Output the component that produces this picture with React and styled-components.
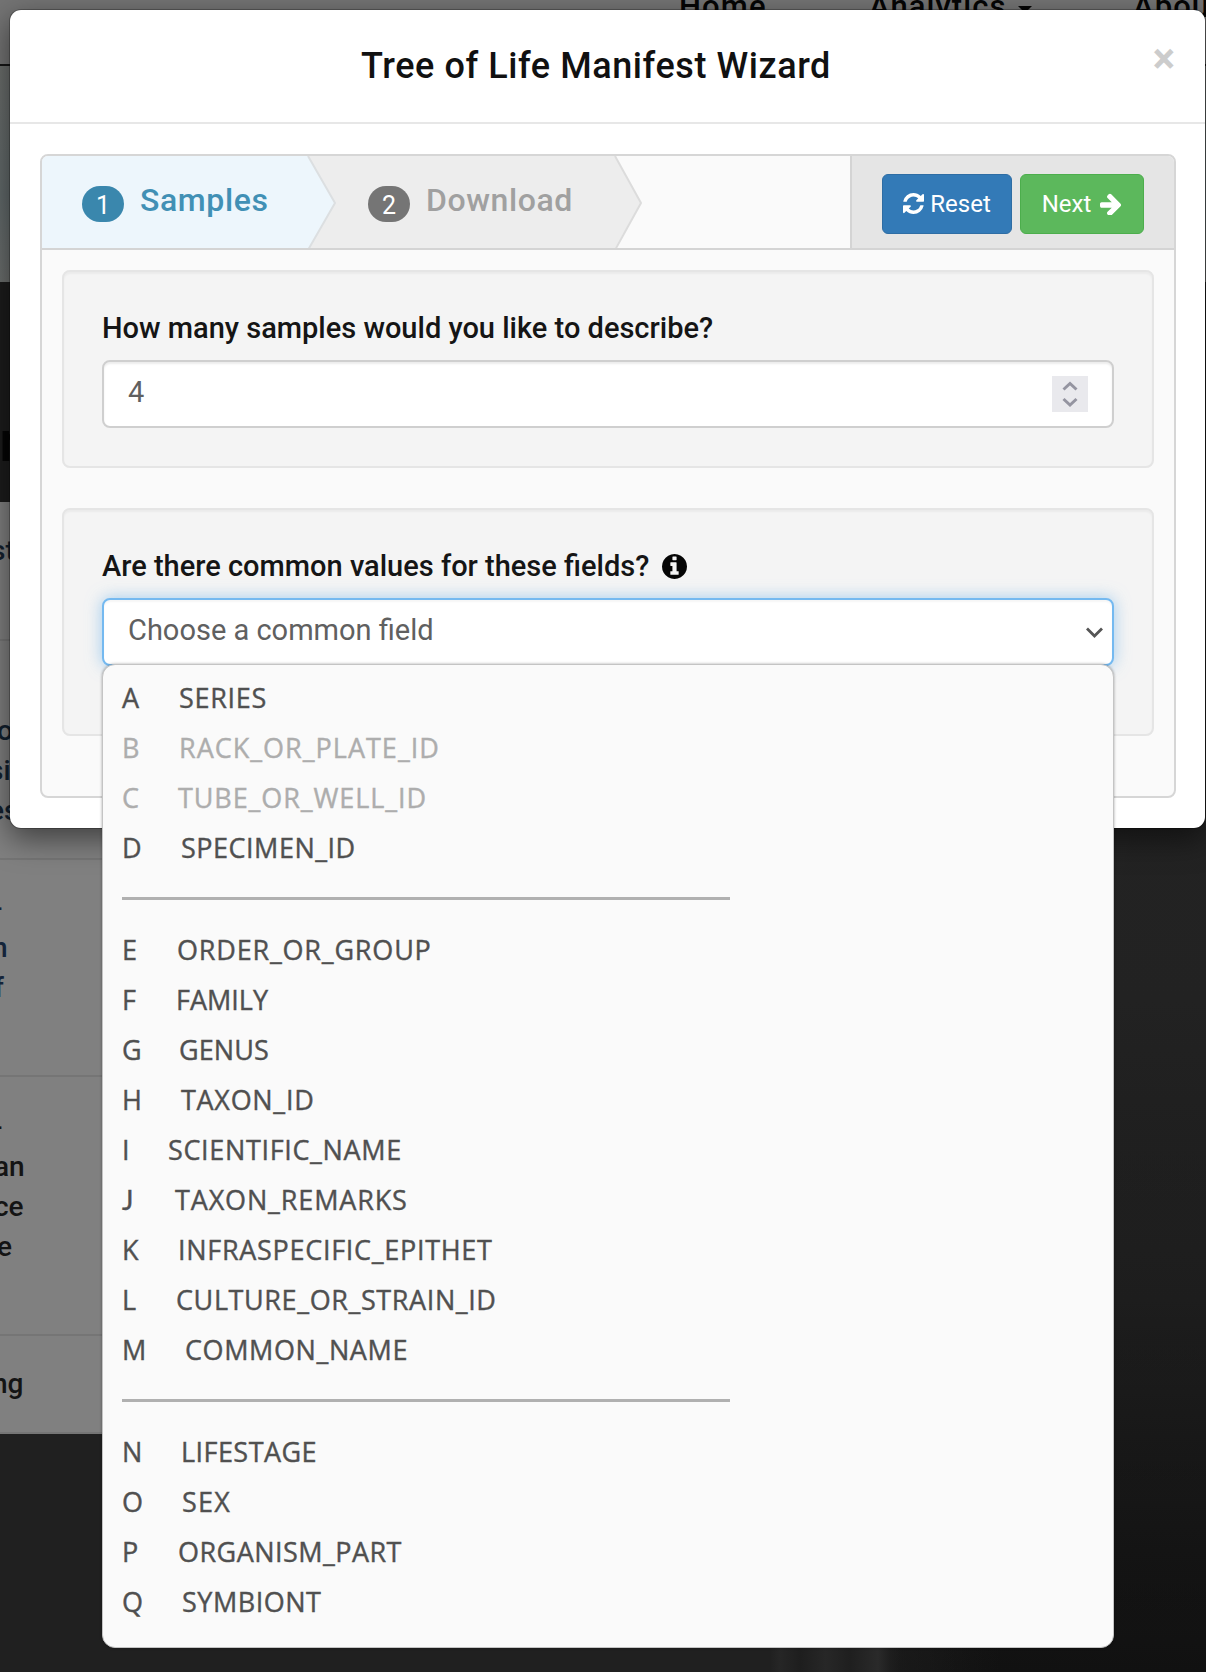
import React from "react";
import styled, { createGlobalStyle } from "styled-components";

const Global = createGlobalStyle`
  *, *::before, *::after { box-sizing: border-box; }
  html, body { margin: 0; padding: 0; }
  body {
    font-family: Roboto, "Liberation Sans", sans-serif;
    font-size: 28px;
    color: #111;
    background: #202020;
  }
  h4, p { margin: 0; }
`;

/* ---------- page behind the dialog ---------- */

const Page = styled.div`
  position: relative;
  width: 1206px;
  height: 1672px;
  overflow: hidden;
  background:
    linear-gradient(90deg, transparent 770px, #262626 780px, #1e1e1e 800px, #272727 826px, #1f1f1f 850px, #2a2a2a 878px, #1e1e1e 890px, transparent 900px) 0 1640px / 100% 32px no-repeat,
    linear-gradient(90deg, #202020 800px, transparent 1000px),
    linear-gradient(100deg, transparent 1000px, rgba(0, 0, 0, 0.2) 1260px),
    linear-gradient(#2b2b2b 800px, #2a2a2a 1000px, #242424 1300px, #191919 1550px, #151515 1672px);
`;

const Navbar = styled.nav`
  height: 66px;
  display: flex;
  padding-left: 679px;
  background: #747474;
  border-bottom: 2px solid #161616;
`;

const NavItem = styled.span`
  width: ${(p) => p.$width}px;
  flex: none;
  height: 34px;
  margin-top: -10px;
  line-height: 34px;
  font-size: 31px;
  font-weight: 500;
  letter-spacing: 1.1px;
  color: #050505;
  white-space: nowrap;
`;

const Caret = styled.i`
  display: inline-block;
  margin-left: 11px;
  vertical-align: 4px;
  border: 7px solid transparent;
  border-top-color: #050505;
  border-bottom: 0;
`;

const Band = styled.div`
  height: ${(p) => p.$height}px;
  background: ${(p) => p.$bg};
  padding-top: ${(p) => p.$top || 0}px;
  overflow: hidden;
`;

const Heading = styled.div`
  margin-left: -1px;
  font-size: 58px;
  line-height: 44px;
  font-weight: 500;
  color: #050505;
`;

const Cell = styled.div`
  width: 600px;
  height: ${(p) => p.$height}px;
  padding-top: ${(p) => p.$top}px;
  background: #808080;
  border-bottom: 2px solid #757575;
  color: ${(p) => p.$color || "#141414"};
`;

const Line = styled.div`
  height: 40px;
  line-height: 40px;
  margin-left: ${(p) => p.$shift}px;
  font-size: 28px;
  font-weight: 500;
  white-space: nowrap;
`;

/* ---------- dialog ---------- */

const Dialog = styled.section`
  position: absolute;
  top: 9px;
  left: 9px;
  width: 1197px;
  height: 820px;
  background: #fff;
  background-clip: padding-box;
  border: 1px solid rgba(0, 0, 0, 0.25);
  border-radius: 12px;
  box-shadow: 0 10px 30px rgba(0, 0, 0, 0.5);
`;

const DialogHeader = styled.header`
  height: 114px;
  padding: 0 29px 0 30px;
  display: flex;
  border-bottom: 2px solid #e7e7e7;
`;

const Title = styled.h4`
  flex: 1;
  padding-top: 33px;
  line-height: 46px;
  text-align: center;
  font-size: 36px;
  font-weight: 500;
  letter-spacing: 0.57px;
  color: #111;
`;

const Close = styled.button`
  width: 24px;
  height: 42px;
  margin-top: 28px;
  padding: 0;
  border: 0;
  background: none;
  font: 700 42px/42px Roboto, sans-serif;
  color: #ccc;
`;

const DialogBody = styled.div`
  padding: 30px 29px 0 30px;
`;

const Wizard = styled.div`
  height: 644px;
  border: 2px solid #d6d6d6;
  border-radius: 8px;
  background: #fafafa;
`;

const WizardHeader = styled.div`
  height: 94px;
  display: flex;
  border-bottom: 2px solid #d4d4d4;
  border-radius: 6px 6px 0 0;
  overflow: hidden;
`;

const Steps = styled.ol`
  position: relative;
  flex: 1;
  display: flex;
  margin: 0;
  padding: 0;
  list-style: none;
`;

const StepBackdrop = styled.svg`
  position: absolute;
  inset: 0;
`;

const Step = styled.li`
  position: relative;
  width: 286px;
  display: flex;
  padding: 30px 0 0 40px;
  gap: 16px;
  color: ${(p) => (p.$active ? "#4190b5" : "#a0a0a0")};
`;

const Badge = styled.span`
  width: 42px;
  height: 36px;
  border-radius: 18px;
  background: ${(p) => (p.$active ? "#3a87ad" : "#757575")};
  color: #fff;
  font-size: 25px;
  line-height: 39px;
  text-align: center;
`;

const StepName = styled.span`
  margin-top: -4px;
  line-height: 36px;
  font-size: 32px;
  font-weight: 500;
  letter-spacing: 0.6px;
`;

const Actions = styled.div`
  width: 324px;
  display: flex;
  padding: 18px 0 0 30px;
  gap: 8px;
  background: #e5e5e5;
  border-left: 2px solid #d4d4d4;
`;

const Button = styled.button`
  width: ${(p) => p.$width}px;
  height: 60px;
  display: flex;
  align-items: center;
  justify-content: center;
  gap: ${(p) => p.$gap}px;
  padding: 0 0 1px;
  border: 1px solid ${(p) => p.$edge};
  border-radius: 6px;
  background: ${(p) => p.$bg};
  color: #fff;
  font: 400 24px/34px Roboto, sans-serif;
`;

const Well = styled.fieldset`
  height: ${(p) => p.$height}px;
  margin: ${(p) => p.$top}px 20px 0;
  padding: 39px 38px 0;
  border: 2px solid #e5e5e5;
  border-radius: 8px;
  background: #f4f4f4;
  box-shadow: inset 0 2px 2px rgba(0, 0, 0, 0.04);
`;

const Label = styled.label`
  display: flex;
  align-items: center;
  gap: 13px;
  height: 34px;
  margin-bottom: 15px;
  font-size: 29px;
  font-weight: 500;
  color: #151515;
`;

const Control = styled.div`
  position: relative;
  height: 68px;
  display: flex;
  justify-content: space-between;
  padding: ${(p) => (p.$focused ? "0 9px 0 24px" : "0 24px")};
  border: 2px solid ${(p) => (p.$focused ? "#74b9f0" : "#cfcfcf")};
  border-radius: 8px;
  background: #fff;
  box-shadow: ${(p) =>
    p.$focused
      ? "inset 0 2px 2px rgba(0,0,0,.04), 0 0 16px rgba(102,175,233,.6)"
      : "inset 0 2px 2px rgba(0,0,0,.075)"};
  color: #606060;
  line-height: 61px;
  font-size: 29px;
`;

const Spinner = styled.span`
  width: 36px;
  height: 36px;
  margin-top: 14px;
  background: #e9e9ed;
  display: flex;
`;

const Chevron = styled.svg`
  margin-top: 26px;
`;

const Menu = styled.ul`
  position: absolute;
  top: 64px;
  left: -2px;
  width: 1012px;
  height: 984px;
  margin: 0;
  padding: 8px 19px;
  list-style: none;
  background: #fafafa;
  border: 1px solid #c4c4c4;
  border-radius: 13px;
  box-shadow: 0 0 3px rgba(0, 0, 0, 0.35);
  z-index: 2;
`;

const Option = styled.li`
  height: 50px;
  display: flex;
  line-height: 50px;
  font-family: "Open Sans", "Noto Sans", sans-serif;
  font-size: 27px;
  color: ${(p) => (p.$disabled ? "#adadad" : "#505050")};
  -webkit-text-stroke: 0.4px currentColor;
  white-space: nowrap;
`;

const Code = styled.span`
  width: ${(p) => p.$width}px;
  font-family: ${(p) => (p.$hook ? "Lato, sans-serif" : "inherit")};
`;

const Field = styled.span`
  letter-spacing: ${(p) => p.$track}px;
`;

const Separator = styled.li`
  height: 52px;
  padding-top: 24px;
  &::before {
    content: "";
    display: block;
    width: 608px;
    height: 3px;
    background: #b0b0b0;
  }
`;

function Glyph({ d, size, color = "#fff" }) {
  return (
    <svg width={size} height={size} viewBox="128 128 1536 1536" fill={color}>
      <path d={d} />
    </svg>
  );
}

const REFRESH =
  "M1639 1056q0 5-1 7-64 268-268 434.5t-478 166.5q-146 0-282.5-55t-243.5-157l-129 129q-19 19-45 19t-45-19-19-45v-448q0-26 19-45t45-19h448q26 0 45 19t19 45-19 45l-137 137q71 66 161 102t187 36q134 0 250-65t186-179q11-17 53-117 8-23 30-23h192q13 0 22.5 9.5t9.5 22.5zm25-800v448q0 26-19 45t-45 19h-448q-26 0-45-19t-19-45 19-45l138-138q-148-137-349-137-134 0-250 65t-186 179q-11 17-53 117-8 23-30 23h-199q-13 0-22.5-9.5t-9.5-22.5v-7q65-268 270-434.5t480-166.5q146 0 284 55.5t245 156.5l130-129q19-19 45-19t45 19 19 45z";
const ARROW =
  "M1600 960q0 54-37 91l-651 651q-39 37-91 37-51 0-90-37l-75-75q-38-38-38-91t38-91l293-293h-704q-52 0-84.5-37.5t-32.5-90.5v-128q0-53 32.5-90.5t84.5-37.5h704l-293-294q-38-36-38-90t38-90l75-75q38-38 90-38 53 0 91 38l651 651q37 35 37 90z";
const INFO =
  "M1152 1376v-160q0-14-9-23t-23-9h-96v-512q0-14-9-23t-23-9h-320q-14 0-23 9t-9 23v160q0 14 9 23t23 9h96v320h-96q-14 0-23 9t-9 23v160q0 14 9 23t23 9h448q14 0 23-9t9-23zm-128-896v-160q0-14-9-23t-23-9h-192q-14 0-23 9t-9 23v160q0 14 9 23t23 9h192q14 0 23-9t9-23zm640 416q0 209-103 385.5t-279.5 279.5-385.5 103-385.5-103-279.5-279.5-103-385.5 103-385.5 279.5-279.5 385.5-103 385.5 103 279.5 279.5 103 385.5z";

/* [code, field, code column width, tracking, disabled] */
const GROUPS = [
  [
    ["A", "SERIES", 57, 0.7],
    ["B", "RACK_OR_PLATE_ID", 57, 1, true],
    ["C", "TUBE_OR_WELL_ID", 56, 0.9, true],
    ["D", "SPECIMEN_ID", 59, 0.5],
  ],
  [
    ["E", "ORDER_OR_GROUP", 55, 0.8],
    ["F", "FAMILY", 54, 0],
    ["G", "GENUS", 57, 0.1],
    ["H", "TAXON_ID", 59, 0.7],
    ["I", "SCIENTIFIC_NAME", 46, 0.65],
    ["J", "TAXON_REMARKS", 53, 0.85],
    ["K", "INFRASPECIFIC_EPITHET", 56, 0.7],
    ["L", "CULTURE_OR_STRAIN_ID", 54, 0.6],
    ["M", "COMMON_NAME", 63, 0.6],
  ],
  [
    ["N", "LIFESTAGE", 59, 0.45],
    ["O", "SEX", 60, 1.2],
    ["P", "ORGANISM_PART", 56, 0.45],
    ["Q", "SYMBIONT", 60, 0.5],
  ],
];

function FieldMenu() {
  return (
    <Menu>
      {GROUPS.map((group, i) => (
        <React.Fragment key={i}>
          {i > 0 && <Separator />}
          {group.map(([code, name, width, track, disabled]) => (
            <Option key={code} $disabled={disabled}>
              <Code $width={width} $hook={code === "J"}>
                {code}
              </Code>
              <Field $track={track}>{name}</Field>
            </Option>
          ))}
        </React.Fragment>
      ))}
    </Menu>
  );
}

export default function App() {
  return (
    <Page>
      <Global />
      <Navbar>
        <NavItem $width={190}>Home</NavItem>
        <NavItem $width={264}>
          Analytics
          <Caret />
        </NavItem>
        <NavItem $width={90}>About</NavItem>
      </Navbar>
      <Band $height={216} $bg="linear-gradient(#6b6e6c, #626a6b 60%, #6c6f6e)" />
      <Band $height={220} $bg="#1c1c1c" $top={137}>
        <Heading>r</Heading>
      </Band>
      <Cell $height={139} $top={29} $color="#14202e">
        <Line $shift={-9}>st</Line>
      </Cell>
      <Cell $height={219} $top={70} $color="#12202e">
        <Line $shift={-3}>o</Line>
        <Line $shift={-11}>si</Line>
        <Line $shift={-11}>es</Line>
      </Cell>
      <Cell $height={217} $top={28} $color="#14243a">
        <Line $shift={-7}>-</Line>
        <Line $shift={-8}>n</Line>
        <Line $shift={-6}>f</Line>
      </Cell>
      <Cell $height={259} $top={30}>
        <Line $shift={-7}>-</Line>
        <Line $shift={-6}>an</Line>
        <Line $shift={-6}>ce</Line>
        <Line $shift={-3}>e</Line>
      </Cell>
      <Cell $height={98} $top={28}>
        <Line $shift={-8}>ng</Line>
      </Cell>

      <Dialog>
        <DialogHeader>
          <Title>Tree of Life Manifest Wizard</Title>
          <Close>×</Close>
        </DialogHeader>
        <DialogBody>
          <Wizard>
            <WizardHeader>
              <Steps>
                <StepBackdrop width="807" height="92" viewBox="0 0 807 92">
                  <path d="M0 0H573L599 47L573 92H0Z" fill="#ededed" />
                  <path d="M573 0L599 47L573 94" fill="none" stroke="#dcdcdc" strokeWidth="2" />
                  <path d="M0 0H266L293 47L267 92H0Z" fill="#edf6fc" />
                  <path d="M266 0L293 47L266 94" fill="none" stroke="#dcdfe1" strokeWidth="2" />
                </StepBackdrop>
                <Step $active>
                  <Badge $active>1</Badge>
                  <StepName>Samples</StepName>
                </Step>
                <Step>
                  <Badge>2</Badge>
                  <StepName>Download</StepName>
                </Step>
              </Steps>
              <Actions>
                <Button $width={130} $gap={6} $bg="#337ab7" $edge="#2e6da4">
                  <Glyph d={REFRESH} size={21} />
                  Reset
                </Button>
                <Button $width={124} $gap={9} $bg="#5cb85c" $edge="#4cae4c">
                  Next
                  <Glyph d={ARROW} size={22} />
                </Button>
              </Actions>
            </WizardHeader>

            <Well $height={198} $top={20}>
              <Label>How many samples would you like to describe?</Label>
              <Control>
                <span>4</span>
                <Spinner>
                  <svg width="36" height="36" viewBox="0 0 36 36" fill="none" stroke="#9494a0" strokeWidth="3">
                    <path d="M11.5 13.5L18 7.5L24.5 13.5M11.5 23L18 29L24.5 23" />
                  </svg>
                </Spinner>
              </Control>
            </Well>

            <Well $height={228} $top={40}>
              <Label>
                Are there common values for these fields?
                <Glyph d={INFO} size={25} color="#050505" />
              </Label>
              <Control $focused>
                <span>Choose a common field</span>
                <Chevron width="17" height="14" viewBox="0 0 17 14" fill="none" stroke="#555" strokeWidth="2.8">
                  <path d="M1 2.5L8.5 10L16 2.5" />
                </Chevron>
                <FieldMenu />
              </Control>
            </Well>
          </Wizard>
        </DialogBody>
      </Dialog>
    </Page>
  );
}
